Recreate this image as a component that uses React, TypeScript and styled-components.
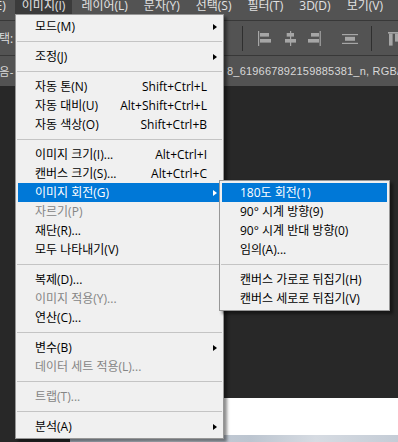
import { styled, createGlobalStyle } from 'styled-components'

type Entry =
  | { kind: 'sep' }
  | {
      kind: 'item'
      label: string
      shortcut?: string
      sub?: boolean
      disabled?: boolean
      active?: boolean
    }

const sep: Entry = { kind: 'sep' }
const item = (label: string, extra: Partial<Omit<Extract<Entry, { kind: 'item' }>, 'kind' | 'label'>> = {}): Entry => ({
  kind: 'item',
  label,
  ...extra,
})

const imageMenu: Entry[] = [
  item('모드(M)', { sub: true }),
  sep,
  item('조정(J)', { sub: true }),
  sep,
  item('자동 톤(N)', { shortcut: 'Shift+Ctrl+L' }),
  item('자동 대비(U)', { shortcut: 'Alt+Shift+Ctrl+L' }),
  item('자동 색상(O)', { shortcut: 'Shift+Ctrl+B' }),
  sep,
  item('이미지 크기(I)...', { shortcut: 'Alt+Ctrl+I' }),
  item('캔버스 크기(S)...', { shortcut: 'Alt+Ctrl+C' }),
  item('이미지 회전(G)', { sub: true, active: true }),
  item('자르기(P)', { disabled: true }),
  item('재단(R)...'),
  item('모두 나타내기(V)'),
  sep,
  item('복제(D)...'),
  item('이미지 적용(Y)...', { disabled: true }),
  item('연산(C)...'),
  sep,
  item('변수(B)', { sub: true }),
  item('데이터 세트 적용(L)...', { disabled: true }),
  sep,
  item('트랩(T)...', { disabled: true }),
  sep,
  item('분석(A)', { sub: true }),
]

const rotateMenu: Entry[] = [
  item('180도 회전(1)', { active: true }),
  item('90° 시계 방향(9)'),
  item('90° 시계 반대 방향(0)'),
  item('임의(A)...'),
  sep,
  item('캔버스 가로로 뒤집기(H)'),
  item('캔버스 세로로 뒤집기(V)'),
]

const barItems = ['편집(E)', '이미지(I)', '레이어(L)', '문자(Y)', '선택(S)', '필터(T)', '3D(D)', '보기(V)', '창(W)']

const MenuList = ({ entries, $pad }: { entries: Entry[]; $pad: number }) => (
  <>
    {entries.map((e, i) =>
      e.kind === 'sep' ? (
        <Separator key={i} />
      ) : (
        <Item key={i} $active={e.active} $disabled={e.disabled} $pad={$pad}>
          <Label>{e.label}</Label>
          {e.shortcut && <Shortcut>{e.shortcut}</Shortcut>}
          <ArrowSlot>{e.sub && <Arrow />}</ArrowSlot>
        </Item>
      ),
    )}
  </>
)

export default function App() {
  return (
    <Screen>
      <GlobalStyle />
      <MenuBar>
        {barItems.map((t) => (
          <BarItem key={t} $open={t === '이미지(I)'}>
            {t}
          </BarItem>
        ))}
      </MenuBar>

      <OptionsBar>
        <OptionsLead>
          <OptionLabel>선택:</OptionLabel>
        </OptionsLead>
        <Divider />
        <ToolIcon $gap={13} viewBox="0 0 16 16">
          <rect x="2" y="1" width="1.2" height="15" />
          <rect x="4" y="3" width="9" height="3.6" />
          <rect x="4" y="9" width="11" height="3.6" />
        </ToolIcon>
        <ToolIcon $gap={11} viewBox="0 0 16 16">
          <rect x="3.7" y="3" width="7.3" height="3.6" />
          <rect x="2" y="9" width="11" height="3.6" />
          <rect x="7" y="1" width="1.2" height="15" />
        </ToolIcon>
        <ToolIcon $gap={7} viewBox="0 0 16 16">
          <rect x="5" y="3" width="8" height="3.6" />
          <rect x="2" y="9" width="11" height="3.6" />
          <rect x="13.6" y="1" width="1.2" height="15" />
        </ToolIcon>
        <ToolIcon $gap={20} viewBox="0 0 16 16">
          <rect x="0" y="4" width="16" height="1.2" />
          <rect x="3" y="6.8" width="10" height="4" />
          <rect x="0" y="12.8" width="16" height="1.2" />
        </ToolIcon>
        <Divider $gap={13} />
        <ToolIcon $gap={16} viewBox="0 0 16 16">
          <rect x="0" y="2" width="16" height="1.6" />
          <rect x="1" y="3.6" width="3.6" height="12" />
          <rect x="7" y="3.6" width="3.6" height="8" />
        </ToolIcon>
      </OptionsBar>

      <TabRow>
        <TabLead>
          <span>없음-</span>
        </TabLead>
        <TabName>8_619667892159885381_n, RGB/8) ×</TabName>
      </TabRow>

      <Workspace>
        <DocCanvas>
          <Photo />
        </DocCanvas>
      </Workspace>

      <MainMenu>
        <MenuList entries={imageMenu} $pad={17} />
      </MainMenu>
      <SubMenu>
        <MenuList entries={rotateMenu} $pad={18} />
      </SubMenu>
    </Screen>
  )
}

const GlobalStyle = createGlobalStyle`
  html, body {
    margin: 0;
    padding: 0;
    background: #282828;
    overflow: hidden;
  }
  * {
    box-sizing: border-box;
  }
`

const Screen = styled.div`
  position: relative;
  width: 398px;
  height: 442px;
  overflow: hidden;
  display: flex;
  flex-direction: column;
  background: #282828;
  font-family: 'Open Sans', 'Noto Sans CJK KR', sans-serif;
`

const MenuBar = styled.div`
  flex: 0 0 21px;
  display: flex;
  align-items: flex-start;
  gap: 2px;
  margin-left: -37px;
  background: #535353;
  border-bottom: 1px solid #383838;
  overflow: hidden;
`

const BarItem = styled.div<{ $open?: boolean }>`
  margin-top: -1px;
  height: 24px;
  padding: 0 7px;
  line-height: 14px;
  font-size: 12px;
  white-space: nowrap;
  color: #e2e2e2;
  background: ${(p) => (p.$open ? '#3b3b3b' : 'transparent')};
`

const OptionsBar = styled.div`
  flex: 0 0 35px;
  display: flex;
  align-items: center;
  background: #535353;
  border-bottom: 1px solid #383838;
  overflow: hidden;
`

const OptionsLead = styled.div`
  flex: 0 0 242px;
  display: flex;
  align-items: center;
`

const OptionLabel = styled.span`
  margin-left: -12px;
  font-size: 12px;
  color: #dedede;
  white-space: nowrap;
`

const Divider = styled.div<{ $gap?: number }>`
  flex: 0 0 1px;
  height: 25px;
  margin-left: ${(p) => p.$gap ?? 0}px;
  background: #2f2f2f;
`

const ToolIcon = styled.svg<{ $gap: number }>`
  flex: 0 0 16px;
  width: 16px;
  height: 16px;
  margin-left: ${(p) => p.$gap}px;
  fill: #a6a6a6;
`

const TabRow = styled.div`
  flex: 0 0 30px;
  display: flex;
  align-items: center;
  background: #535353;
  overflow: hidden;
  font-family: 'Liberation Sans', 'Noto Sans CJK KR', sans-serif;
  font-size: 11px;
  letter-spacing: 0.2px;
  color: #d8d8d8;
  white-space: nowrap;
`

const TabLead = styled.div`
  flex: 0 0 14px;
  span {
    margin-left: -11px;
  }
`

const TabName = styled.span`
  margin-left: 213px;
`

const Workspace = styled.div`
  flex: 1;
  display: flex;
  padding: 312px 0 0 70px;
  background: #282828;
`

const DocCanvas = styled.div`
  flex: 1;
  display: flex;
  flex-direction: column;
  justify-content: flex-end;
  background: #ffffff;
`

const Photo = styled.div`
  height: 7px;
  background: linear-gradient(
    90deg,
    #b4bfcc 0%,
    #c9d0d9 30%,
    #bcc5d0 55%,
    #d6dbe2 75%,
    #c4ccd6 100%
  );
`

const Menu = styled.div`
  position: absolute;
  display: flex;
  flex-direction: column;
  padding: 2px;
  background: #f0f0f0;
  border: 1px solid #979797;
  box-shadow: 3px 3px 3px rgba(0, 0, 0, 0.45);
  font-family: 'Open Sans', 'Noto Sans CJK KR', sans-serif;
  font-size: 12px;
`

const MainMenu = styled(Menu)`
  left: 15px;
  top: 14px;
  width: 209px;
  z-index: 1;
`

const SubMenu = styled(Menu)`
  left: 219px;
  top: 180px;
  width: 171px;
  z-index: 2;
`

const Item = styled.div<{ $active?: boolean; $disabled?: boolean; $pad: number }>`
  height: 19px;
  display: flex;
  align-items: center;
  padding-left: ${(p) => p.$pad}px;
  white-space: nowrap;
  background: ${(p) => (p.$active ? '#0078d7' : 'transparent')};
  color: ${(p) => (p.$active ? '#ffffff' : p.$disabled ? '#858585' : '#000000')};
`

const Label = styled.span`
  flex: 1;
  line-height: 19px;
`

const Shortcut = styled.span`
  line-height: 19px;
`

const ArrowSlot = styled.span`
  flex: 0 0 14px;
  display: flex;
  align-items: center;
  padding-left: 6px;
`

const Arrow = styled.span`
  width: 0;
  height: 0;
  border-left: 4px solid currentColor;
  border-top: 3.5px solid transparent;
  border-bottom: 3.5px solid transparent;
`

const Separator = styled.div`
  flex: 0 0 11px;
  margin: 0 -1px;
  display: flex;
  align-items: center;
  &::before {
    content: '';
    flex: 1;
    height: 1px;
    background: #c4c4c4;
  }
`
